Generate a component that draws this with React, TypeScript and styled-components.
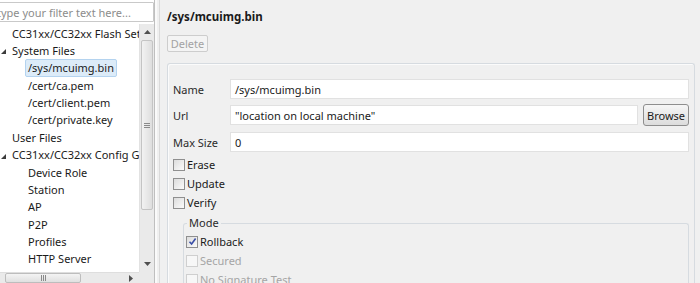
import React from "react";
import styled, { createGlobalStyle } from "styled-components";

const Global = createGlobalStyle`
  html, body { margin: 0; padding: 0; overflow: hidden; background: #f0f0f0; }
  * { box-sizing: border-box; }
`;

const Root = styled.div`
  width: 700px;
  height: 283px;
  display: flex;
  overflow: hidden;
  font-family: "Noto Sans", "Open Sans", sans-serif;
  font-size: 11px;
  color: #1a1a1a;
`;

const LeftPanel = styled.div`
  width: 154px;
  flex: none;
  background: #fff;
  display: flex;
  flex-direction: column;
  overflow: hidden;
`;

const FilterBox = styled.div`
  margin: 2px 0 0 -8px;
  height: 20px;
  border: 1px solid #c9c9c9;
  border-radius: 1px;
  padding: 0 4px;
  display: flex;
  align-items: center;
  color: #8c8c8c;
  white-space: nowrap;
  overflow: hidden;
`;

const TreeArea = styled.div`
  flex: 1;
  margin-top: 2px;
  display: grid;
  grid-template-columns: 1fr 15px;
  grid-template-rows: 1fr 11px;
  min-height: 0;
`;

const TreeList = styled.div`
  overflow: hidden;
  white-space: nowrap;
  padding-top: 1px;
`;

const Row = styled.div<{ $level: number }>`
  height: 17.36px;
  display: flex;
  align-items: center;
  position: relative;
  padding-left: ${(p) => (p.$level === 0 ? 9 : 25)}px;
`;

const Label = styled.span<{ $selected?: boolean }>`
  padding: 0 2px;
  line-height: 16px;
  border: 1px solid ${(p) => (p.$selected ? "#b4d3ef" : "transparent")};
  background: ${(p) => (p.$selected ? "#dcebf8" : "transparent")};
  border-radius: 2px;
`;

const Twisty = styled.svg`
  position: absolute;
  left: 1px;
  top: 7px;
`;

const VScroll = styled.div`
  background: #eaeaea;
  border-left: 1px solid #e2e2e2;
  display: flex;
  flex-direction: column;
  align-items: center;
`;

const ArrowCell = styled.div`
  height: 16px;
  width: 100%;
  display: flex;
  align-items: center;
  justify-content: center;
`;

const VThumb = styled.div`
  width: 12px;
  height: 170px;
  border: 1px solid #c4c4c4;
  border-radius: 2px;
  background: linear-gradient(to right, #f2f2f2, #dedede);
  display: flex;
  align-items: center;
  justify-content: center;
`;

const Spacer = styled.div`
  flex: 1;
`;

const HScroll = styled.div`
  background: #eaeaea;
  border-top: 1px solid #dedede;
  display: flex;
  align-items: center;
  padding-left: 5px;
`;

const HThumb = styled.div`
  width: 76px;
  height: 10px;
  border: 1px solid #bdbdbd;
  border-radius: 2px;
  background: linear-gradient(#f4f4f4, #e0e0e0);
  display: flex;
  align-items: center;
  justify-content: center;
`;

const Corner = styled.div`
  background: #eaeaea;
`;

const Sash = styled.div`
  width: 6px;
  flex: none;
  background: #f0f0f0;
  border-left: 1px solid #bfbfbf;
  border-right: 1px solid #dadada;
  box-shadow: inset 2px 0 0 #fafafa;
`;

const RightPanel = styled.div`
  flex: 1;
  background: #f0f0f0;
  padding: 9px 5px 0 7px;
  display: flex;
  flex-direction: column;
  align-items: flex-start;
`;

const Title = styled.div`
  font-weight: 700;
  font-size: 11.5px;
  line-height: 16px;
  color: #1a1a1a;
`;

const DisabledButton = styled.div`
  margin-top: 10px;
  width: 41px;
  height: 21px;
  border: 1px solid #cdcdcd;
  border-radius: 2px;
  background: #f4f4f4;
  color: #a3a3a3;
  display: flex;
  align-items: center;
  justify-content: center;
`;

const GroupBox = styled.div`
  align-self: stretch;
  margin-top: 11px;
  flex: 1;
  border: 1px solid #d6dbe0;
  border-bottom: none;
  border-radius: 3px 3px 0 0;
  padding: 15px 5px 0 5px;
  box-shadow: inset 1px 1px 0 #fbfbfb;
`;

const FormGrid = styled.div`
  display: grid;
  grid-template-columns: 57px 1fr;
  row-gap: 6px;
  align-items: center;
`;

const FieldLabel = styled.div`
  color: #2a2a2a;
`;

const FieldRow = styled.div`
  display: flex;
  gap: 5px;
`;

const TextField = styled.div`
  flex: 1;
  height: 20px;
  background: #fff;
  border: 1px solid #e1e1e1;
  padding: 0 4px;
  display: flex;
  align-items: center;
  color: #1a1a1a;
  white-space: nowrap;
  overflow: hidden;
`;

const PushButton = styled.div`
  width: 46px;
  height: 22px;
  margin-top: -1px;
  border: 1px solid #8e8e8e;
  border-radius: 3px;
  background: linear-gradient(#f6f6f6, #dcdcdc);
  display: flex;
  align-items: center;
  justify-content: center;
  color: #1a1a1a;
`;

const CheckList = styled.div`
  margin-top: 3px;
  display: flex;
  flex-direction: column;
`;

const CheckRow = styled.div<{ $disabled?: boolean }>`
  height: 19px;
  display: flex;
  align-items: center;
  gap: 2px;
  color: ${(p) => (p.$disabled ? "#a5a5a5" : "#1a1a1a")};
`;

const Box = styled.div<{ $disabled?: boolean }>`
  width: 12px;
  height: 12px;
  border: 1px solid ${(p) => (p.$disabled ? "#cfcfcf" : "#8f8f8f")};
  background: ${(p) =>
    p.$disabled ? "#f7f7f7" : "linear-gradient(135deg, #dcdcdc, #fbfbfb)"};
  display: flex;
  align-items: center;
  justify-content: center;
`;

const ModeSet = styled.fieldset`
  margin: 3px 0 0 10px;
  padding: 0 0 0 2px;
  border: 1px solid #d6dbe0;
  border-bottom: none;
  border-radius: 3px 3px 0 0;
`;

const Legend = styled.legend`
  padding: 0 2px;
  margin-left: 1px;
  line-height: 16px;
  color: #2a2a2a;
`;

const ModeList = styled.div`
  padding-top: 1px;
  display: flex;
  flex-direction: column;
`;

type Node = { text: string; level: number; open?: boolean; selected?: boolean };

const nodes: Node[] = [
  { text: "CC31xx/CC32xx Flash Setup", level: 0 },
  { text: "System Files", level: 0, open: true },
  { text: "/sys/mcuimg.bin", level: 1, selected: true },
  { text: "/cert/ca.pem", level: 1 },
  { text: "/cert/client.pem", level: 1 },
  { text: "/cert/private.key", level: 1 },
  { text: "User Files", level: 0 },
  { text: "CC31xx/CC32xx Config Group", level: 0, open: true },
  { text: "Device Role", level: 1 },
  { text: "Station", level: 1 },
  { text: "AP", level: 1 },
  { text: "P2P", level: 1 },
  { text: "Profiles", level: 1 },
  { text: "HTTP Server", level: 1 },
  { text: "DHCP Server", level: 1 },
];

function Check({ label, checked, disabled }: { label: string; checked?: boolean; disabled?: boolean }) {
  return (
    <CheckRow $disabled={disabled}>
      <Box $disabled={disabled}>
        {checked && (
          <svg width="9" height="9" viewBox="0 0 9 9">
            <path d="M1.5 4.8 L3.6 7 L7.6 1.5" fill="none" stroke="#3a4fa8" strokeWidth="1.6" />
          </svg>
        )}
      </Box>
      <span>{label}</span>
    </CheckRow>
  );
}

export default function App() {
  return (
    <Root>
      <Global />
      <LeftPanel>
        <FilterBox>type your filter text here...</FilterBox>
        <TreeArea>
          <TreeList>
            {nodes.map((n) => (
              <Row key={n.text} $level={n.level}>
                {n.open && (
                  <Twisty width="5" height="5" viewBox="0 0 5 5">
                    <path d="M5 0 L5 5 L0 5 Z" fill="#3c3c3c" />
                  </Twisty>
                )}
                <Label $selected={n.selected}>{n.text}</Label>
              </Row>
            ))}
          </TreeList>
          <VScroll>
            <ArrowCell>
              <svg width="7" height="4" viewBox="0 0 7 4">
                <path d="M0 4 L3.5 0 L7 4 Z" fill="#505050" />
              </svg>
            </ArrowCell>
            <VThumb>
              <svg width="6" height="5" viewBox="0 0 6 5">
                <path d="M0 0.5 H6 M0 2.5 H6 M0 4.5 H6" stroke="#8a8a8a" strokeWidth="1" />
              </svg>
            </VThumb>
            <Spacer />
            <ArrowCell>
              <svg width="7" height="4" viewBox="0 0 7 4">
                <path d="M0 0 L7 0 L3.5 4 Z" fill="#505050" />
              </svg>
            </ArrowCell>
          </VScroll>
          <HScroll>
            <HThumb>
              <svg width="5" height="6" viewBox="0 0 5 6">
                <path d="M0.5 0 V6 M2.5 0 V6 M4.5 0 V6" stroke="#8a8a8a" strokeWidth="1" />
              </svg>
            </HThumb>
            <Spacer />
            <svg width="4" height="7" viewBox="0 0 4 7" style={{ marginRight: 6 }}>
              <path d="M0 0 L4 3.5 L0 7 Z" fill="#505050" />
            </svg>
          </HScroll>
          <Corner />
        </TreeArea>
      </LeftPanel>
      <Sash />
      <RightPanel>
        <Title>/sys/mcuimg.bin</Title>
        <DisabledButton>Delete</DisabledButton>
        <GroupBox>
          <FormGrid>
            <FieldLabel>Name</FieldLabel>
            <FieldRow>
              <TextField>/sys/mcuimg.bin</TextField>
            </FieldRow>
            <FieldLabel>Url</FieldLabel>
            <FieldRow>
              <TextField>"location on local machine"</TextField>
              <PushButton>Browse</PushButton>
            </FieldRow>
            <FieldLabel>Max Size</FieldLabel>
            <FieldRow>
              <TextField>0</TextField>
            </FieldRow>
          </FormGrid>
          <CheckList>
            <Check label="Erase" />
            <Check label="Update" />
            <Check label="Verify" />
          </CheckList>
          <ModeSet>
            <Legend>Mode</Legend>
            <ModeList>
              <Check label="Rollback" checked />
              <Check label="Secured" disabled />
              <Check label="No Signature Test" disabled />
            </ModeList>
          </ModeSet>
        </GroupBox>
      </RightPanel>
    </Root>
  );
}
